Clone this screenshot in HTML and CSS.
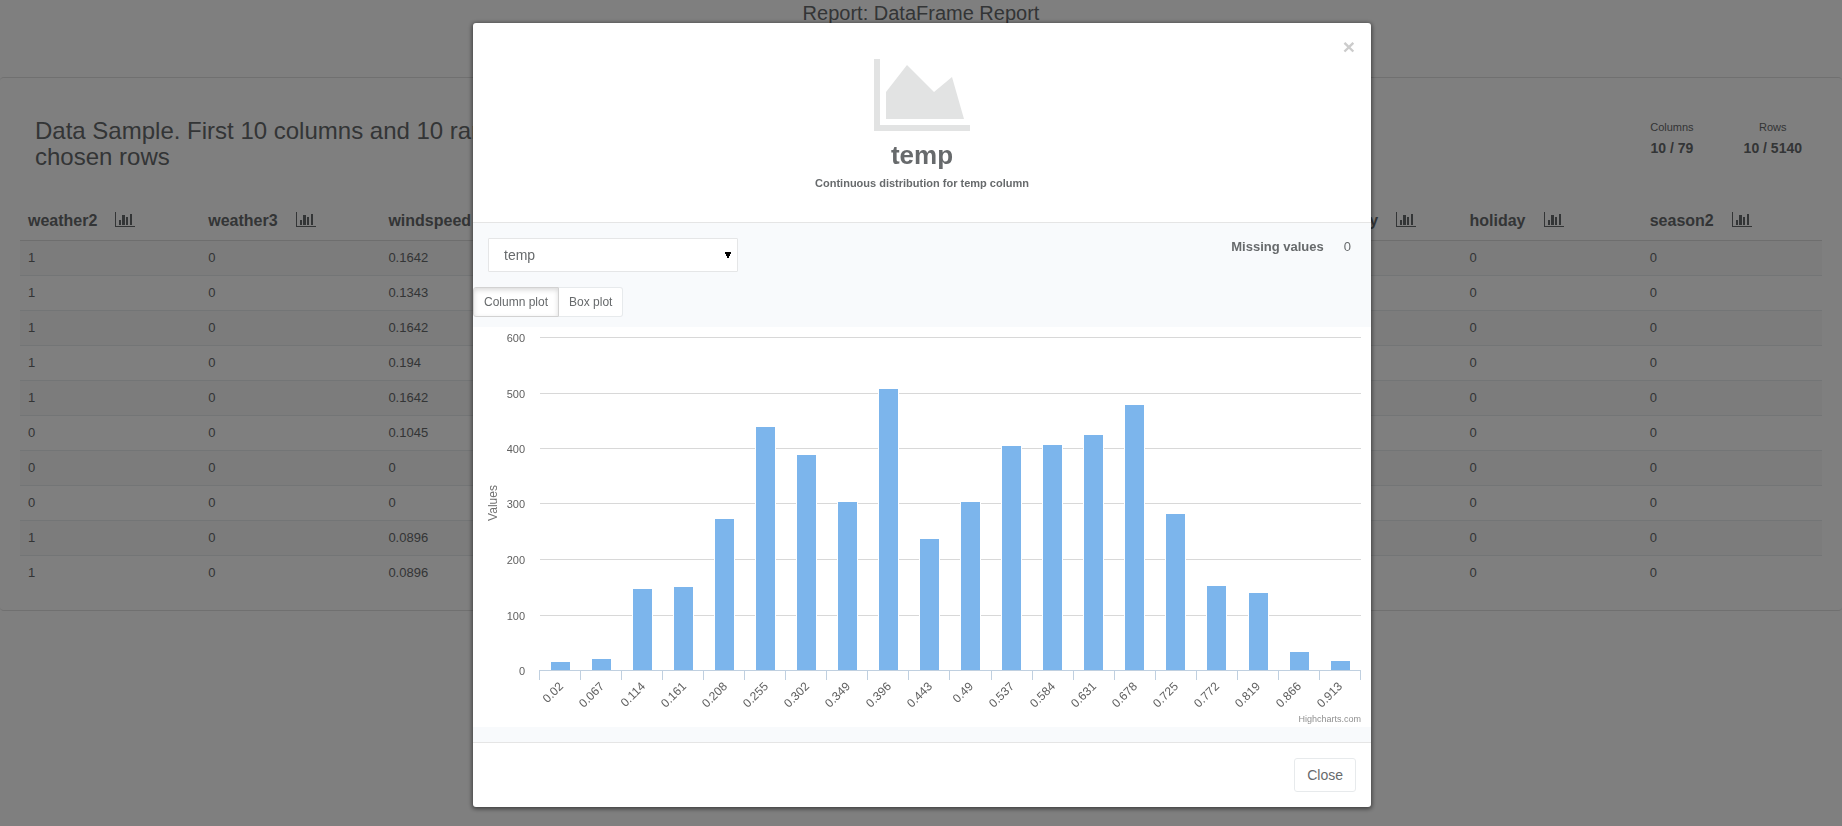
FILE: index.html
```html
<!DOCTYPE html>
<html lang="en">
<head>
<meta charset="utf-8">
<title>DataFrame Report</title>
<link rel="stylesheet" href="styles.css">
</head>
<body>
<svg class="sprite" aria-hidden="true">
  <symbol id="bar-chart" viewBox="0 0 20 16">
    <path d="M0 0h1v14h19v1H0zM4 8h2v5H4zM7 3h3v10H7zM11 5h2v8h-2zM15 2h2v11h-2z"/>
  </symbol>
</svg>

<div class="page">
  <h1 class="page-title">Report: DataFrame Report</h1>
  <section class="panel">
    <header class="panel-head">
      <h2 class="panel-title">Data Sample. First 10 columns and 10 randomly chosen rows</h2>
      <dl class="stats">
        <div class="stat"><dt>Columns</dt><dd>10 / 79</dd></div>
        <div class="stat"><dt>Rows</dt><dd>10 / 5140</dd></div>
      </dl>
    </header>
    <table class="sample">
      <thead>
        <tr>
          <th>weather2<svg class="col-icon"><use href="#bar-chart"/></svg></th>
          <th>weather3<svg class="col-icon"><use href="#bar-chart"/></svg></th>
          <th>windspeed</th>
          <th></th><th></th><th></th><th></th>
          <th>workingday<svg class="col-icon"><use href="#bar-chart"/></svg></th>
          <th>holiday<svg class="col-icon"><use href="#bar-chart"/></svg></th>
          <th>season2<svg class="col-icon"><use href="#bar-chart"/></svg></th>
        </tr>
      </thead>
      <tbody>
        <tr><td>1</td><td>0</td><td>0.1642</td><td></td><td></td><td></td><td></td><td></td><td>0</td><td>0</td></tr>
        <tr><td>1</td><td>0</td><td>0.1343</td><td></td><td></td><td></td><td></td><td></td><td>0</td><td>0</td></tr>
        <tr><td>1</td><td>0</td><td>0.1642</td><td></td><td></td><td></td><td></td><td></td><td>0</td><td>0</td></tr>
        <tr><td>1</td><td>0</td><td>0.194</td><td></td><td></td><td></td><td></td><td></td><td>0</td><td>0</td></tr>
        <tr><td>1</td><td>0</td><td>0.1642</td><td></td><td></td><td></td><td></td><td></td><td>0</td><td>0</td></tr>
        <tr><td>0</td><td>0</td><td>0.1045</td><td></td><td></td><td></td><td></td><td></td><td>0</td><td>0</td></tr>
        <tr><td>0</td><td>0</td><td>0</td><td></td><td></td><td></td><td></td><td></td><td>0</td><td>0</td></tr>
        <tr><td>0</td><td>0</td><td>0</td><td></td><td></td><td></td><td></td><td></td><td>0</td><td>0</td></tr>
        <tr><td>1</td><td>0</td><td>0.0896</td><td></td><td></td><td></td><td></td><td></td><td>0</td><td>0</td></tr>
        <tr><td>1</td><td>0</td><td>0.0896</td><td></td><td></td><td></td><td></td><td></td><td>0</td><td>0</td></tr>
      </tbody>
    </table>
  </section>
</div>

<div class="overlay">
  <div class="modal" role="dialog" aria-modal="true" aria-labelledby="modal-title">
    <header class="modal-head">
      <button class="dismiss" type="button" aria-label="Dismiss">×</button>
      <svg class="modal-icon" viewBox="0 0 2048 1792" aria-hidden="true">
        <path d="M2048 1536v128H0V128h128v1408zM1664 512l256 896H256V832l448-576 576 576z"/>
      </svg>
      <h4 class="modal-title" id="modal-title">temp</h4>
      <small class="modal-sub">Continuous distribution for temp column</small>
    </header>
    <div class="modal-body">
      <div class="controls">
        <select class="column-select" aria-label="Column"><option>temp</option></select>
        <dl class="missing"><dt>Missing values</dt><dd>0</dd></dl>
      </div>
      <div class="plot-switch">
        <button class="switch-btn is-active" type="button">Column plot</button><button class="switch-btn" type="button">Box plot</button>
      </div>
      <svg class="chart" viewBox="0 0 898 400" role="img" aria-label="Distribution of temp">
        <path class="grid" d="M67 10.5H888M67 66.5H888M67 121.5H888M67 176.5H888M67 232.5H888M67 288.5H888"/>
        <g class="bars">
          <rect x="77.5" y="334.5" width="20" height="9"/>
          <rect x="118.5" y="331.5" width="20" height="12"/>
          <rect x="159.5" y="261.5" width="20" height="82"/>
          <rect x="200.5" y="259.5" width="20" height="84"/>
          <rect x="241.5" y="191.5" width="20" height="152"/>
          <rect x="282.5" y="99.5" width="20" height="244"/>
          <rect x="323.5" y="127.5" width="20" height="216"/>
          <rect x="364.5" y="174.5" width="20" height="169"/>
          <rect x="405.5" y="61.5" width="20" height="282"/>
          <rect x="446.5" y="211.5" width="20" height="132"/>
          <rect x="487.5" y="174.5" width="20" height="169"/>
          <rect x="528.5" y="118.5" width="20" height="225"/>
          <rect x="569.5" y="117.5" width="20" height="226"/>
          <rect x="610.5" y="107.5" width="20" height="236"/>
          <rect x="651.5" y="77.5" width="20" height="266"/>
          <rect x="692.5" y="186.5" width="20" height="157"/>
          <rect x="733.5" y="258.5" width="20" height="85"/>
          <rect x="775.5" y="265.5" width="20" height="78"/>
          <rect x="816.5" y="324.5" width="20" height="19"/>
          <rect x="857.5" y="333.5" width="20" height="10"/>
        </g>
        <path class="axis" d="M66 343.5H888M66.5 343v10M107.5 343v10M148.5 343v10M189.5 343v10M230.5 343v10M271.5 343v10M312.5 343v10M353.5 343v10M394.5 343v10M435.5 343v10M476.5 343v10M518.5 343v10M559.5 343v10M600.5 343v10M641.5 343v10M682.5 343v10M723.5 343v10M764.5 343v10M805.5 343v10M846.5 343v10M887.5 343v10"/>
        <g class="y-labels">
          <text x="52" y="15">600</text><text x="52" y="71">500</text><text x="52" y="126">400</text><text x="52" y="181">300</text><text x="52" y="237">200</text><text x="52" y="293">100</text><text x="52" y="348">0</text>
        </g>
        <text class="y-title" transform="translate(24 176) rotate(-90)">Values</text>
        <g class="x-labels">
          <text transform="translate(91 360) rotate(-45)">0.02</text>
          <text transform="translate(132 360) rotate(-45)">0.067</text>
          <text transform="translate(173 360) rotate(-45)">0.114</text>
          <text transform="translate(214 360) rotate(-45)">0.161</text>
          <text transform="translate(255 360) rotate(-45)">0.208</text>
          <text transform="translate(296 360) rotate(-45)">0.255</text>
          <text transform="translate(337 360) rotate(-45)">0.302</text>
          <text transform="translate(378 360) rotate(-45)">0.349</text>
          <text transform="translate(419 360) rotate(-45)">0.396</text>
          <text transform="translate(460 360) rotate(-45)">0.443</text>
          <text transform="translate(501 360) rotate(-45)">0.49</text>
          <text transform="translate(542 360) rotate(-45)">0.537</text>
          <text transform="translate(583 360) rotate(-45)">0.584</text>
          <text transform="translate(624 360) rotate(-45)">0.631</text>
          <text transform="translate(665 360) rotate(-45)">0.678</text>
          <text transform="translate(706 360) rotate(-45)">0.725</text>
          <text transform="translate(747 360) rotate(-45)">0.772</text>
          <text transform="translate(788 360) rotate(-45)">0.819</text>
          <text transform="translate(829 360) rotate(-45)">0.866</text>
          <text transform="translate(870 360) rotate(-45)">0.913</text>
        </g>
        <text class="credit" x="888" y="395">Highcharts.com</text>
      </svg>
    </div>
    <footer class="modal-foot">
      <button class="close-btn" type="button">Close</button>
    </footer>
  </div>
</div>
</body>
</html>
```

FILE: styles.css
```css
* { box-sizing: border-box; }

body {
  margin: 0;
  background: #fff;
  color: #676a6c;
  font: 13px/18px "Liberation Sans", Arial, sans-serif;
}

h1, h2, h4, dl, dd { margin: 0; }

button, select { font-family: inherit; color: inherit; }

.sprite { position: absolute; width: 0; height: 0; }

/* Report page */
.page-title {
  height: 77px;
  font-size: 20px;
  line-height: 26px;
  font-weight: 400;
  text-align: center;
}

.panel {
  padding: 20px;
  border: solid #e0e0e0;
  border-width: 1px 0;
  border-radius: 4px;
}

.panel-head {
  display: flex;
  justify-content: space-between;
  padding: 20px 20px 31px 15px;
}

.panel-title {
  width: 32%;
  font-size: 24px;
  line-height: 26px;
  font-weight: 400;
}

.stats { display: flex; gap: 50px; text-align: center; }
.stat dt { font-size: 11px; line-height: 18px; }
.stat dd { font-size: 14px; line-height: 24px; font-weight: 700; }

.sample {
  width: 100%;
  table-layout: fixed;
  border-collapse: separate;
  border-spacing: 0;
}

.sample th {
  height: 39px;
  padding: 0 8px;
  font-size: 16px;
  line-height: 24px;
  text-align: left;
  white-space: nowrap;
}

.sample td { height: 35px; padding: 0 8px; border-top: 1px solid #e7eaec; }
.sample tbody tr:first-child td { border-top-color: #ddd; }
.sample tbody tr:nth-child(odd) { background: #f9f9f9; }

.col-icon {
  width: 20px;
  height: 16px;
  margin-left: 18px;
  vertical-align: -2px;
  fill: currentColor;
}

/* Modal */
.overlay {
  position: fixed;
  inset: 0;
  overflow: hidden;
  padding: 23px 0 0 2px;
  background: rgba(0, 0, 0, .5);
}

.modal {
  position: relative;
  max-width: 898px;
  margin: 0 auto;
  background: #fff;
  border-radius: 3px;
  box-shadow: 0 1px 4px 1px rgba(0, 0, 0, .5);
}

.modal-head {
  display: flex;
  flex-direction: column;
  align-items: center;
  padding: 30px 15px 28px;
  border-bottom: 1px solid #e5e5e5;
}

.dismiss {
  position: absolute;
  top: 12px;
  right: 16px;
  padding: 0;
  border: 0;
  background: none;
  color: #ccc;
  font-size: 21px;
  line-height: 24px;
  font-weight: 700;
}

.modal-icon { width: 96px; height: 84px; fill: #e2e3e3; }
.modal-title { font-size: 26px; line-height: 36px; }
.modal-sub { font-size: 11px; line-height: 21px; font-weight: 700; }

.modal-body { padding-bottom: 15px; background: #f8fafc; }

.controls {
  display: flex;
  justify-content: space-between;
  align-items: flex-start;
  padding: 15px 20px 15px 15px;
}

.column-select {
  width: 250px;
  height: 34px;
  padding: 0 6px 0 15px;
  border: 1px solid #e5e6e7;
  border-radius: 1px;
  background: #fff url("data:image/svg+xml,%3Csvg xmlns='http://www.w3.org/2000/svg' width='6' height='6'%3E%3Cpath d='M0 0h6v2H5v2H4v2H2V4H1V2H0z'/%3E%3C/svg%3E") no-repeat right 6px center;
  font-size: 14px;
  appearance: none;
}

.missing { display: flex; gap: 20px; }
.missing dt { font-weight: 700; }

.plot-switch { display: flex; padding-bottom: 10px; }

.switch-btn {
  height: 30px;
  padding: 0 10px;
  border: 1px solid #e7eaec;
  border-radius: 0 3px 3px 0;
  background: #fff;
  font-size: 12px;
}

.switch-btn + .switch-btn { border-left: 0; }

.switch-btn.is-active {
  border-color: #d2d2d2;
  border-radius: 3px 0 0 3px;
  box-shadow: inset 0 2px 5px rgba(0, 0, 0, .15);
}

.chart { display: block; width: 100%; background: #fff; }
.chart text { fill: #606060; font-size: 11px; }
.grid { stroke: #d8d8d8; shape-rendering: crispEdges; }
.axis { fill: none; stroke: #c0d0e0; shape-rendering: crispEdges; }
.bars { fill: #7cb5ec; stroke: #fff; }
.y-labels, .x-labels, .chart .credit { text-anchor: end; }
.chart .x-labels text { font-size: 12px; }
.chart .y-title { fill: #707070; font-size: 12px; text-anchor: middle; }
.chart .credit { fill: #909090; font-size: 9px; }

.modal-foot {
  display: flex;
  justify-content: flex-end;
  padding: 15px;
  border-top: 1px solid #e5e5e5;
}

.close-btn {
  height: 34px;
  padding: 0 12px;
  border: 1px solid #e7eaec;
  border-radius: 3px;
  background: #fff;
  font-size: 14px;
}
```
